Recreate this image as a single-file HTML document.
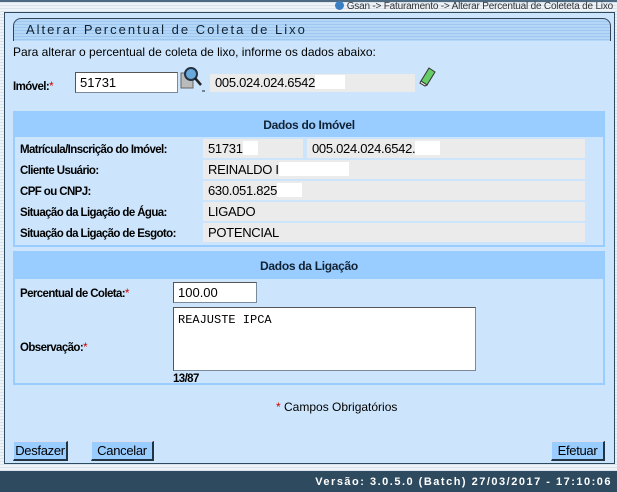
<!DOCTYPE html>
<html><head><meta charset="utf-8"><style>
*{margin:0;padding:0;box-sizing:border-box}
body{width:617px;height:492px;overflow:hidden;position:relative;font-family:"Liberation Sans",Arial,sans-serif;font-size:12px;color:#000;
background:repeating-linear-gradient(#eef3f8 0 2px,#d8e3ee 2px 3px);}
.a{position:absolute}
.top{left:0;top:0;width:617px;height:2px;background:#4d6a80}
.bc{right:4px;top:1px;font-size:10px;color:#333;line-height:11px;letter-spacing:-0.2px}
.panel{left:4px;top:12px;width:611px;height:452px;background:#cce5fc;border:1px solid #2d4a5e}
.title{left:13px;top:18px;width:598px;height:23px;border:1px solid #345;border-bottom:none;border-radius:8px 8px 0 0;
background:repeating-linear-gradient(#b4d6f7 0 2px,#9ec8f0 2px 3px);font-size:13px;letter-spacing:2px;color:#123;padding:3px 0 0 12px}
.lbl{font-weight:bold;font-size:11.5px;letter-spacing:-0.6px;margin-top:2px}
.req{color:#c00;font-weight:normal}
.in{background:#fff;border:1px solid #7a8a99;border-top-color:#555;border-left-color:#555;padding:0 4px;font-size:13px}
.g{background:#ebebeb;font-size:13px;padding-left:5px;line-height:20px;letter-spacing:-0.3px}
.w{background:#fff}
.box{left:13px;width:592px;border:2px solid #99ccff;background:#cce5fc}
.hd{background:#99ccff;text-align:center;font-weight:bold;font-size:12px;color:#123;letter-spacing:-0.3px}
.btn{background:#99ccff;border:1px solid #345;border-top-color:#dde;border-left-color:#dde;border-right:2px solid #234;border-bottom:2px solid #234;font-size:13px;padding:1px 0 0 0;height:20px;text-align:center;letter-spacing:-0.3px}
.foot{left:0;top:471px;width:617px;height:21px;background:#2e4a5f;color:#fff;font-weight:bold;font-size:11px;letter-spacing:1.5px;text-align:right;padding:5px 5px 0 0}
</style></head><body>
<div class="a top"></div>
<div class="a bc"><span style="display:inline-block;width:9px;height:9px;border-radius:50%;background:#3a7fc4;vertical-align:-1px"></span> Gsan -&gt; Faturamento -&gt; Alterar Percentual de Coleteta de Lixo</div>
<div class="a panel"></div>
<div class="a title">Alterar Percentual de Coleta de Lixo</div>
<div class="a" style="left:13px;top:45px">Para alterar o percentual de coleta de lixo, informe os dados abaixo:</div>
<div class="a lbl" style="left:13px;top:79px">Imóvel:<span class="req">*</span></div>
<div class="a in" style="left:75px;top:72px;width:103px;height:21px;line-height:19px">51731</div>
<svg class="a" style="left:180px;top:66px" width="26" height="28" viewBox="0 0 26 28">
<rect x="1" y="7" width="12" height="15" fill="#bbb" stroke="#666"/>
<circle cx="11" cy="8" r="6" fill="#6aa8dc" stroke="#234" stroke-width="2"/>
<line x1="15" y1="12" x2="21" y2="19" stroke="#222" stroke-width="2.5"/>
<line x1="22" y1="25" x2="25" y2="25" stroke="#222"/></svg>
<div class="a g" style="left:210px;top:74px;width:205px;height:18px;line-height:18px">005.024.024.6542<span class="w" style="display:inline-block;width:30px;height:14px;vertical-align:-2px"></span></div>
<svg class="a" style="left:419px;top:67px" width="18" height="20" viewBox="0 0 18 20">
<path d="M10 1 L16 5 L8 18 L2 14 Z" fill="#6c6" stroke="#333"/><path d="M2 14 L8 18 L6 19 L1 16 Z" fill="#eee" stroke="#333"/></svg>

<div class="a box" style="top:111px;height:136px">
<div class="hd" style="height:24px;line-height:24px">Dados do Imóvel</div>
</div>
<div class="a lbl" style="left:20px;top:142px">Matrícula/Inscrição do Imóvel:</div>
<div class="a g" style="left:203px;top:139px;width:100px;height:19px">51731<span class="w" style="display:inline-block;width:15px;height:14px;vertical-align:-2px"></span></div>
<div class="a g" style="left:307px;top:139px;width:278px;height:19px">005.024.024.6542.<span class="w" style="display:inline-block;width:25px;height:14px;vertical-align:-2px"></span></div>
<div class="a lbl" style="left:20px;top:163px">Cliente Usuário:</div>
<div class="a g" style="left:203px;top:160px;width:382px;height:19px">REINALDO I<span class="w" style="display:inline-block;width:70px;height:14px;vertical-align:-2px"></span></div>
<div class="a lbl" style="left:20px;top:184px">CPF ou CNPJ:</div>
<div class="a g" style="left:203px;top:181px;width:382px;height:19px">630.051.825<span class="w" style="display:inline-block;width:25px;height:14px;vertical-align:-2px"></span></div>
<div class="a lbl" style="left:20px;top:205px">Situação da Ligação de Água:</div>
<div class="a g" style="left:203px;top:202px;width:382px;height:19px">LIGADO</div>
<div class="a lbl" style="left:20px;top:226px">Situação da Ligação de Esgoto:</div>
<div class="a g" style="left:203px;top:223px;width:382px;height:19px">POTENCIAL</div>

<div class="a box" style="top:251px;height:134px">
<div class="hd" style="height:26px;line-height:26px">Dados da Ligação</div>
</div>
<div class="a lbl" style="left:20px;top:286px">Percentual de Coleta:<span class="req">*</span></div>
<div class="a in" style="left:173px;top:282px;width:84px;height:21px;line-height:19px">100.00</div>
<div class="a lbl" style="left:20px;top:340px">Observação:<span class="req">*</span></div>
<div class="a in" style="left:173px;top:307px;width:303px;height:64px;font-family:'Liberation Mono',monospace;font-size:12px;padding-top:5px">REAJUSTE IPCA</div>
<div class="a lbl" style="left:173px;top:371px">13/87</div>
<div class="a" style="left:276px;top:400px"><span style="color:#c00">*</span> Campos Obrigatórios</div>
<div class="a btn" style="left:13px;top:441px;width:55px">Desfazer</div>
<div class="a btn" style="left:91px;top:441px;width:63px">Cancelar</div>
<div class="a btn" style="left:551px;top:441px;width:54px">Efetuar</div>
<div class="a foot">Versão: 3.0.5.0 (Batch) 27/03/2017 - 17:10:06</div>
</body></html>
